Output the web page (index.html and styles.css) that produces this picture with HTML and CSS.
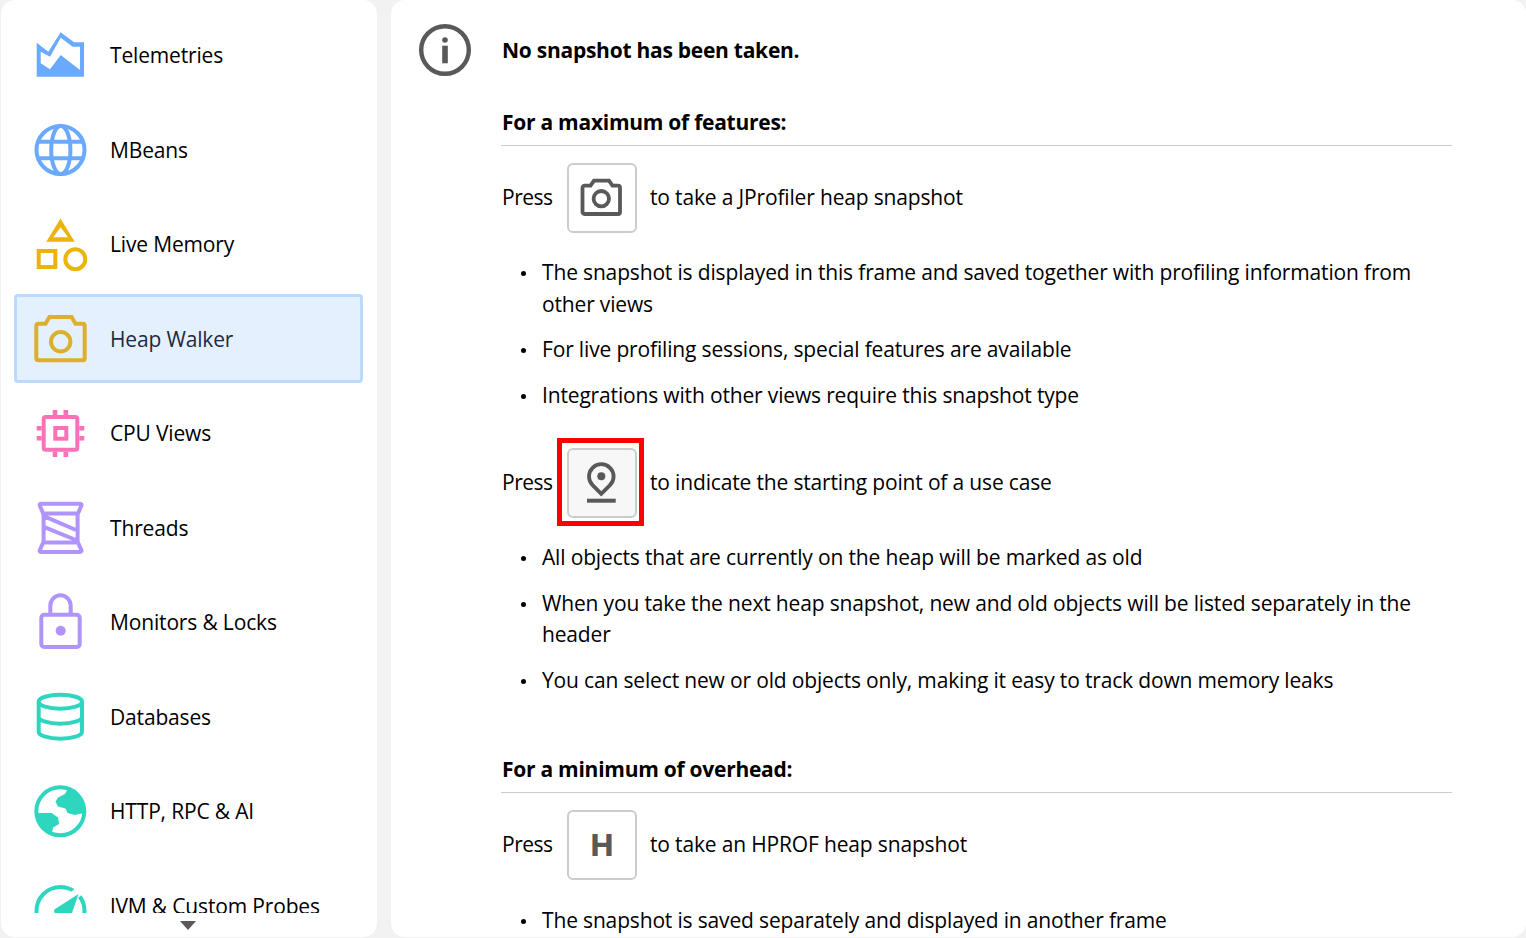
FILE: index.html
```html
<!DOCTYPE html>
<html lang="en">
<head>
<meta charset="utf-8">
<title>Heap Walker</title>
<link rel="stylesheet" href="styles.css">
</head>
<body>
<aside class="sidebar">
  <nav class="nav">
    <a class="item">
      <svg class="nav-icon" viewBox="0 0 54 54"><path class="fill-blue" fill-rule="evenodd" d="M2.7 14.7L14.3 23.7 26.7 4.3 40 14.3H50V48.7H2.7ZM6.7 23.7V35.3L16 41.3 26.7 27 46 42V18.7H38.7L26.7 9.7 16 28.7Z"/></svg>
      <span>Telemetries</span>
    </a>
    <a class="item">
      <svg class="nav-icon stroke-blue" viewBox="0 0 54 54"><circle cx="26.5" cy="27" r="24"/><ellipse cx="26.8" cy="27" rx="9.6" ry="24"/><path d="M4 18.7H49M4 35.3H49"/></svg>
      <span>MBeans</span>
    </a>
    <a class="item">
      <svg class="nav-icon" viewBox="0 0 54 54"><path class="fill-yellow" fill-rule="evenodd" d="M26.5 1.5L40.7 24.7H12.3ZM26.6 10.3L19.3 20.3H34Z"/><g class="stroke-yellow"><rect x="4.7" y="34" width="16.6" height="16"/><circle cx="41.3" cy="42.2" r="10"/></g></svg>
      <span>Live Memory</span>
    </a>
    <a class="item selected">
      <svg class="nav-icon stroke-gold" viewBox="0 0 54 54"><path d="M4.3 11.7H11.5L15.5 5H37.5L41.5 11.7H48.7a2 2 0 0 1 2 2V46.3a2 2 0 0 1-2 2H4.3a2 2 0 0 1-2-2V13.7a2 2 0 0 1 2-2Z"/><circle cx="26.7" cy="29.7" r="9.7"/></svg>
      <span>Heap Walker</span>
    </a>
    <a class="item">
      <svg class="nav-icon" viewBox="0 0 54 54"><g class="stroke-pink"><rect x="9.7" y="11" width="33.6" height="32.7" rx="2"/><rect x="21.3" y="22" width="11" height="10.7"/></g><path class="fill-pink" d="M18.7 4H23.3V9H18.7ZM29.5 4H34.2V9H29.5ZM18.7 45.7H23.3V51H18.7ZM29.5 45.7H34.2V51H29.5ZM2.7 20H7.7V24.5H2.7ZM2.7 30H7.7V34.5H2.7ZM45.3 20H50.3V24.5H45.3ZM45.3 30H50.3V34.5H45.3Z"/></svg>
      <span>CPU Views</span>
    </a>
    <a class="item">
      <svg class="nav-icon stroke-purple" viewBox="0 0 54 54"><path d="M7 2.7H45.5Q48.2 2.7 47.2 5L44 12.5H9.2L6 5Q5 2.7 7 2.7ZM7 51H45.5Q48.2 51 47.2 48.7L44 41.5H9.2L6 48.7Q5 51 7 51ZM9.6 12.5V41.5M43.6 12.5V41.5M11 15.7L42 29M11 26.3L42 39"/></svg>
      <span>Threads</span>
    </a>
    <a class="item">
      <svg class="nav-icon lock stroke-purple" viewBox="0 0 54 54"><rect x="7.3" y="19.7" width="38.4" height="32.3" rx="3"/><path d="M16.3 19V10.5a10.2 10.2 0 0 1 20.4 0V19"/><circle class="dot-purple" cx="26.7" cy="35.7" r="5"/></svg>
      <span>Monitors &amp; Locks</span>
    </a>
    <a class="item">
      <svg class="nav-icon stroke-teal" viewBox="0 0 54 54"><ellipse cx="26.35" cy="11.7" rx="21.65" ry="7"/><path d="M4.7 11.7V41.7A21.65 7 0 0 0 48 41.7V11.7M4.7 26.7A21.65 7 0 0 0 48 26.7"/></svg>
      <span>Databases</span>
    </a>
    <a class="item">
      <svg class="nav-icon" viewBox="0 0 54 54"><circle class="stroke-teal" cx="26.3" cy="27.3" r="24"/><path class="fill-teal" d="M34.1 4.5L30.8 10.1 24.1 13.5 21.5 17.8 24.1 22.5 31.5 24.5 33.5 29.1 40.8 31.1 50.1 29.1 50 18 44 9ZM3.5 29.1H17.5L24.1 33.5 25.1 40.1 19.1 43.5 17.5 51.1 8 44 3.5 36Z"/></svg>
      <span>HTTP, RPC &amp; AI</span>
    </a>
    <a class="item">
      <svg class="nav-icon" viewBox="0 0 54 54"><circle class="stroke-teal" cx="26.5" cy="32" r="24"/><path class="needle-gap" d="M30 24L48 10"/><path class="fill-teal" d="M44.5 15L21 30Q19 32 21 34V40H38V34Z"/></svg>
      <span>JVM &amp; Custom Probes</span>
    </a>
  </nav>
  <div class="more"></div>
</aside>
<main class="panel">
  <svg class="info" viewBox="0 0 54 54"><circle cx="27" cy="27" r="23.8"/><circle class="info-dot" cx="27" cy="17" r="2.8"/><rect class="info-dot" x="24.2" y="22.7" width="5.6" height="17.6"/></svg>
  <div class="content">
    <p class="lead">No snapshot has been taken.</p>
    <h2 class="heading first">For a maximum of features:</h2>
    <div class="press">
      <span class="press-label">Press</span>
      <span class="key">
        <svg class="key-icon" viewBox="0 0 46 46"><path d="M5.5 10.7H11.5L15 5.7H30L33.5 10.7H39a2 2 0 0 1 2 2V37a2 2 0 0 1-2 2H5.5a2 2 0 0 1-2-2V12.7a2 2 0 0 1 2-2Z"/><circle cx="22.3" cy="23.7" r="7.7"/></svg>
      </span>
      <span>to take a JProfiler heap snapshot</span>
    </div>
    <ul class="notes notes-first">
      <li>The snapshot is displayed in this frame and saved together with profiling information from other views</li>
      <li>For live profiling sessions, special features are available</li>
      <li>Integrations with other views require this snapshot type</li>
    </ul>
    <div class="press second">
      <span class="press-label">Press</span>
      <span class="key active">
        <svg class="key-icon" viewBox="0 0 46 46"><path d="M22.3 33.9L13.6 25.2A12.3 12.3 0 1 1 31 25.2Z"/><circle class="key-dot" cx="22.3" cy="16.3" r="4"/><rect class="key-dot" x="8" y="38.7" width="28.7" height="4"/></svg>
        <span class="marker"></span>
      </span>
      <span>to indicate the starting point of a use case</span>
    </div>
    <ul class="notes notes-second">
      <li>All objects that are currently on the heap will be marked as old</li>
      <li>When you take the next heap snapshot, new and old objects will be listed separately in the header</li>
      <li>You can select new or old objects only, making it easy to track down memory leaks</li>
    </ul>
    <h2 class="heading last">For a minimum of overhead:</h2>
    <div class="press">
      <span class="press-label">Press</span>
      <span class="key"><span class="key-letter">H</span></span>
      <span>to take an HPROF heap snapshot</span>
    </div>
    <ul class="notes notes-last">
      <li>The snapshot is saved separately and displayed in another frame</li>
    </ul>
  </div>
</main>
</body>
</html>
```
FILE: styles.css
```css
* { box-sizing: border-box; }
html, body { height: 100%; }
body {
  margin: 0;
  height: 938px;
  overflow: hidden;
  display: flex;
  gap: 14px;
  padding: 0 0 1px 1px;
  background: #f2f2f2;
  color: #000;
  font-family: "Open Sans", "Noto Sans", sans-serif;
  font-size: 21px;
  line-height: 31.5px;
  letter-spacing: -0.16px;
}
.sidebar {
  width: 376px;
  flex: none;
  background: #fff;
  border-radius: 14px;
  padding-top: 10.5px;
  display: flex;
  flex-direction: column;
}
.nav {
  height: 902.5px;
  overflow: hidden;
  display: flex;
  flex-direction: column;
  gap: 5.5px;
  padding: 0 14px 0 13px;
}
.item {
  height: 89px;
  flex: none;
  display: flex;
  align-items: center;
  gap: 22px;
  padding-left: 17px;
  border: 3px solid transparent;
  border-radius: 4px;
}
.item span { padding-top: 2px; }
.item.selected {
  background: #e5f0ff;
  border-color: #bbdaff;
  color: #1c2b3d;
}
.nav-icon { width: 54px; height: 54px; flex: none; overflow: visible; fill: none; stroke-width: 4; }
.more {
  width: 0;
  height: 0;
  margin: 7.5px 0 0 179px;
  border-left: 8px solid transparent;
  border-right: 8px solid transparent;
  border-top: 9px solid #595959;
}
.fill-blue { fill: #69aaff; }
.stroke-blue { stroke: #69aaff; }
.fill-yellow { fill: #ecb30c; }
.stroke-yellow { stroke: #ecb30c; }
.stroke-gold { stroke: #dbb02f; }
.stroke-pink { stroke: #f972b8; }
.fill-pink { fill: #f972b8; }
.stroke-purple { stroke: #b094fb; }
.dot-purple { fill: #b094fb; stroke: none; }
.stroke-teal { stroke: #2fd6bf; }
.fill-teal { fill: #2fd6bf; }
.needle-gap { stroke: #fff; stroke-width: 9; }
.panel {
  flex: 1;
  min-width: 0;
  background: #fff;
  border-radius: 14px;
  overflow: hidden;
  display: flex;
  align-items: flex-start;
  gap: 29px;
  padding-left: 27px;
}
.info { width: 54px; height: 54px; flex: none; margin-top: 23px; fill: none; stroke: #595959; stroke-width: 4.4; }
.info-dot { fill: #595959; stroke: none; }
.content { width: 951px; flex: none; padding-top: 34px; }
.lead { margin: 0; padding-left: 1px; font-weight: 700; line-height: 32px; letter-spacing: -0.26px; }
.heading {
  margin: 0;
  padding: 0 0 7px 1px;
  border-bottom: 1px solid #ccc;
  font-size: inherit;
  font-weight: 700;
  line-height: 32px;
  letter-spacing: -0.26px;
}
.heading.first { margin-top: 40px; }
.heading.last { margin-top: 56.1px; }
.press {
  display: flex;
  align-items: center;
  padding-left: 1px;
  gap: 13px;
  margin-top: 17px;
}
.press-label { width: 52px; flex: none; letter-spacing: -0.5px; }
.press.second { margin-top: 37px; }
.key {
  position: relative;
  width: 70px;
  height: 70px;
  flex: none;
  display: flex;
  align-items: center;
  justify-content: center;
  background: #fff;
  border: 2px solid #ccc;
  border-radius: 6px;
}
.key.active { background: #f7f7f7; }
.key-icon { width: 46px; height: 46px; fill: none; stroke: #595959; stroke-width: 3.8; }
.key-dot { fill: #595959; stroke: none; }
.key-letter {
  color: #595959;
  font-family: "Inter", "Liberation Sans", sans-serif;
  font-size: 30px;
  font-weight: 800;
  letter-spacing: 0;
  line-height: 1;
}
.marker {
  position: absolute;
  inset: -12px -9px -10px -12px;
  border: 5px solid #f00;
}
.notes {
  list-style: none;
  margin: 0;
  padding: 0 0 0 41px;
  display: flex;
  flex-direction: column;
  gap: 14.5px;
}
.notes-first { margin-top: 24px; gap: 14px; }
.notes-second { margin-top: 23.9px; }
.notes-last { margin-top: 25px; }
.notes li { position: relative; }
.notes li::before {
  content: "";
  position: absolute;
  left: -21.5px;
  top: 14px;
  width: 5px;
  height: 5px;
  border-radius: 50%;
  background: #000;
}
```
